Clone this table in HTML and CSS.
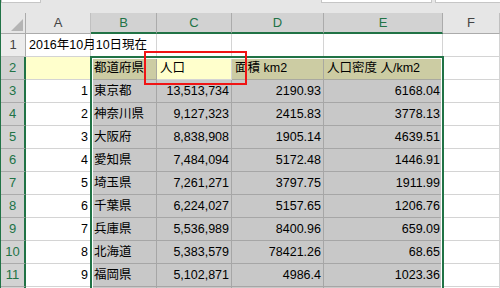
FILE: index.html
```html
<!DOCTYPE html>
<html lang="ja">
<head>
<meta charset="utf-8">
<link rel="stylesheet" href="styles.css">
</head>
<body>
<div class="window">
  <div class="toolbar">
    <div class="box box-name"></div>
    <div class="box box-mid"></div>
    <div class="box box-formula"></div>
  </div>
  <div class="sheet">
    <div class="corner"><svg width="25" height="21" viewBox="0 0 25 21"><polygon points="22,6 22,18 10,18" fill="#b4b4b4"/></svg></div>
    <div class="ch">A</div>
    <div class="ch ch-sel">B</div>
    <div class="ch ch-sel">C</div>
    <div class="ch ch-sel">D</div>
    <div class="ch ch-sel">E</div>
    <div class="ch">F</div>

    <div class="rh">1</div>
    <div class="c c-title">2016年10月10日現在</div>
    <div class="c"></div><div class="c"></div><div class="c"></div><div class="c"></div><div class="c"></div>

    <div class="rh rh-sel">2</div>
    <div class="c yellow"></div>
    <div class="c khaki">都道府県</div>
    <div class="c yellow">人口</div>
    <div class="c khaki">面積 km2</div>
    <div class="c khaki">人口密度 人/km2</div>
    <div class="c"></div>

    <div class="rh rh-sel">3</div><div class="c num">1</div><div class="c gray">東京都</div><div class="c gray num">13,513,734</div><div class="c gray num">2190.93</div><div class="c gray num">6168.04</div><div class="c"></div>
    <div class="rh rh-sel">4</div><div class="c num">2</div><div class="c gray">神奈川県</div><div class="c gray num">9,127,323</div><div class="c gray num">2415.83</div><div class="c gray num">3778.13</div><div class="c"></div>
    <div class="rh rh-sel">5</div><div class="c num">3</div><div class="c gray">大阪府</div><div class="c gray num">8,838,908</div><div class="c gray num">1905.14</div><div class="c gray num">4639.51</div><div class="c"></div>
    <div class="rh rh-sel">6</div><div class="c num">4</div><div class="c gray">愛知県</div><div class="c gray num">7,484,094</div><div class="c gray num">5172.48</div><div class="c gray num">1446.91</div><div class="c"></div>
    <div class="rh rh-sel">7</div><div class="c num">5</div><div class="c gray">埼玉県</div><div class="c gray num">7,261,271</div><div class="c gray num">3797.75</div><div class="c gray num">1911.99</div><div class="c"></div>
    <div class="rh rh-sel">8</div><div class="c num">6</div><div class="c gray">千葉県</div><div class="c gray num">6,224,027</div><div class="c gray num">5157.65</div><div class="c gray num">1206.76</div><div class="c"></div>
    <div class="rh rh-sel">9</div><div class="c num">7</div><div class="c gray">兵庫県</div><div class="c gray num">5,536,989</div><div class="c gray num">8400.96</div><div class="c gray num">659.09</div><div class="c"></div>
    <div class="rh rh-sel">10</div><div class="c num">8</div><div class="c gray">北海道</div><div class="c gray num">5,383,579</div><div class="c gray num">78421.26</div><div class="c gray num">68.65</div><div class="c"></div>
    <div class="rh rh-sel">11</div><div class="c num">9</div><div class="c gray">福岡県</div><div class="c gray num">5,102,871</div><div class="c gray num">4986.4</div><div class="c gray num">1023.36</div><div class="c"></div>
    <div class="rh rh-sel"></div><div class="c"></div><div class="c gray"></div><div class="c gray"></div><div class="c gray"></div><div class="c gray"></div><div class="c"></div>

    <div class="selection"></div>
    <div class="mark"></div>
  </div>
</div>
</body>
</html>
```

FILE: styles.css
```css
* { box-sizing: border-box; }
html, body { margin: 0; padding: 0; background: #ffffff; }
body {
  font-family: "Liberation Sans", "Noto Sans CJK JP", sans-serif;
  font-size: 12.5px;
  color: #000;
}
.window {
  width: 500px;
  height: 288px;
  overflow: hidden;
  border-left: 1px solid #217346;
  background: #ffffff;
}
.toolbar {
  height: 13px;
  background: #e6e6e6;
  display: flex;
  align-items: flex-start;
}
.box {
  height: 3px;
  background: #ffffff;
  border: 1px solid #c6c6c6;
  border-top: none;
}
.box-name { width: 40px; }
.box-mid { width: 111px; margin-left: 280px; }
.box-formula { flex: 1; margin-left: 3px; border-right: none; }

.sheet {
  position: relative;
  display: grid;
  grid-template-columns: 25px 65px 66px 75px 92px 119px 57px;
  grid-template-rows: 21px repeat(12, 23px);
  overflow: hidden;
  height: 275px;
  background: #ffffff;
}
.corner {
  background: #e6e6e6;
  border-right: 1px solid #ababab;
  border-bottom: 1px solid #ababab;
}
.corner svg { display: block; }
.ch {
  background: #e6e6e6;
  border-right: 1px solid #c0c0c0;
  border-bottom: 1px solid #ababab;
  text-align: center;
  line-height: 20px;
  font-size: 13px;
  color: #444;
}
.ch-sel {
  background: #d2d2d2;
  color: #217346;
  border-right-color: #ababab;
  border-bottom: 2px solid #217346;
}
.rh {
  background: #ececec;
  border-right: 1px solid #ababab;
  border-bottom: 1px solid #c6c6c6;
  text-align: center;
  line-height: 22px;
  font-size: 13px;
  color: #444;
}
.rh-sel {
  background: #d2d2d2;
  color: #217346;
  border-right: 2px solid #217346;
  border-bottom-color: #ababab;
}
.c {
  border-right: 1px solid #d4d4d4;
  border-bottom: 1px solid #d4d4d4;
  line-height: 22px;
  padding: 0 3px;
  white-space: nowrap;
}
.c-title { overflow: visible; }
.num { text-align: right; padding-right: 2px; }
.yellow { background: #ffffcc; }
.khaki { background: #cccca3; border-color: #a9a9a0; }
.gray { background: #c8c8c8; border-color: #a6a6a6; }

.selection {
  position: absolute;
  left: 89px;
  top: 43px;
  width: 354px;
  height: 260px;
  border: 2px solid #217346;
  box-shadow: inset 0 0 0 1px #ffffff;
  pointer-events: none;
}
.mark {
  position: absolute;
  left: 143px;
  top: 38px;
  width: 103px;
  height: 34px;
  border: 2px solid #f01414;
  pointer-events: none;
}
```
